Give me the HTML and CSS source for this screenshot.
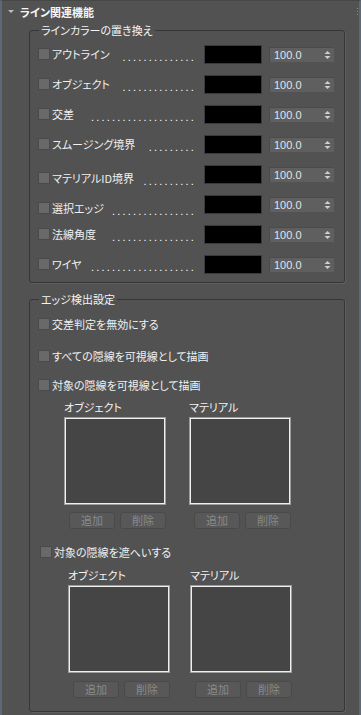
FILE: index.html
```html
<!DOCTYPE html>
<html lang="ja">
<head>
    <meta charset="UTF-8">
    <meta name="viewport" content="width=device-width, initial-scale=1.0">
    <title>ライン関連機能</title>
    <link rel="stylesheet" href="styles.css">
</head>
<body>
    <div class="panel">
        <div class="rollout-head">
            <span class="arrow"></span>
            <span class="title">ライン関連機能</span>
            <svg class="grip" width="2" height="7" viewBox="0 0 2 7"><rect x="0" y="0" width="1" height="1"/><rect x="0" y="3" width="1" height="1"/><rect x="0" y="6" width="1" height="1"/></svg>
        </div>

        <fieldset class="group colors">
            <legend>ラインカラーの置き換え</legend>
            <div class="row">
                <div class="lead"><span class="cb"></span><span class="lbl">アウトライン</span><span class="dots">..............</span></div>
                <span class="swatch"></span>
                <span class="spin"><span class="num">100.0</span><svg width="7" height="10" viewBox="0 0 7 10"><polygon points="0.5,4 3.5,1 6.5,4"/><polygon points="0.5,6 3.5,9 6.5,6"/></svg></span>
            </div>
            <div class="row">
                <div class="lead"><span class="cb"></span><span class="lbl">オブジェクト</span><span class="dots">..............</span></div>
                <span class="swatch"></span>
                <span class="spin"><span class="num">100.0</span><svg width="7" height="10" viewBox="0 0 7 10"><polygon points="0.5,4 3.5,1 6.5,4"/><polygon points="0.5,6 3.5,9 6.5,6"/></svg></span>
            </div>
            <div class="row">
                <div class="lead"><span class="cb"></span><span class="lbl">交差</span><span class="dots">....................</span></div>
                <span class="swatch"></span>
                <span class="spin"><span class="num">100.0</span><svg width="7" height="10" viewBox="0 0 7 10"><polygon points="0.5,4 3.5,1 6.5,4"/><polygon points="0.5,6 3.5,9 6.5,6"/></svg></span>
            </div>
            <div class="row">
                <div class="lead"><span class="cb"></span><span class="lbl">スムージング境界</span><span class="dots">.........</span></div>
                <span class="swatch"></span>
                <span class="spin"><span class="num">100.0</span><svg width="7" height="10" viewBox="0 0 7 10"><polygon points="0.5,4 3.5,1 6.5,4"/><polygon points="0.5,6 3.5,9 6.5,6"/></svg></span>
            </div>
            <div class="row low">
                <div class="lead"><span class="cb"></span><span class="lbl">マテリアルID境界</span><span class="dots">..........</span></div>
                <span class="swatch"></span>
                <span class="spin"><span class="num">100.0</span><svg width="7" height="10" viewBox="0 0 7 10"><polygon points="0.5,4 3.5,1 6.5,4"/><polygon points="0.5,6 3.5,9 6.5,6"/></svg></span>
            </div>
            <div class="row low">
                <div class="lead"><span class="cb"></span><span class="lbl">選択エッジ</span><span class="dots">................</span></div>
                <span class="swatch"></span>
                <span class="spin"><span class="num">100.0</span><svg width="7" height="10" viewBox="0 0 7 10"><polygon points="0.5,4 3.5,1 6.5,4"/><polygon points="0.5,6 3.5,9 6.5,6"/></svg></span>
            </div>
            <div class="row">
                <div class="lead"><span class="cb"></span><span class="lbl">法線角度</span><span class="dots">................</span></div>
                <span class="swatch"></span>
                <span class="spin"><span class="num">100.0</span><svg width="7" height="10" viewBox="0 0 7 10"><polygon points="0.5,4 3.5,1 6.5,4"/><polygon points="0.5,6 3.5,9 6.5,6"/></svg></span>
            </div>
            <div class="row">
                <div class="lead"><span class="cb"></span><span class="lbl">ワイヤ</span><span class="dots">....................</span></div>
                <span class="swatch"></span>
                <span class="spin"><span class="num">100.0</span><svg width="7" height="10" viewBox="0 0 7 10"><polygon points="0.5,4 3.5,1 6.5,4"/><polygon points="0.5,6 3.5,9 6.5,6"/></svg></span>
            </div>
        </fieldset>

        <fieldset class="group edges">
            <legend>エッジ検出設定</legend>
            <div class="check c1"><span class="cb"></span><span class="lbl">交差判定を無効にする</span></div>
            <div class="check c2"><span class="cb"></span><span class="lbl">すべての隠線を可視線として描画</span></div>
            <div class="check c3"><span class="cb"></span><span class="lbl">対象の隠線を可視線として描画</span></div>

            <div class="lists lists-a">
                <div class="col">
                    <div class="cap">オブジェクト</div>
                    <div class="listbox"></div>
                    <div class="btns"><button disabled>追加</button><button disabled>削除</button></div>
                </div>
                <div class="col">
                    <div class="cap">マテリアル</div>
                    <div class="listbox"></div>
                    <div class="btns"><button disabled>追加</button><button disabled>削除</button></div>
                </div>
            </div>

            <div class="check c4"><span class="cb"></span><span class="lbl">対象の隠線を遮へいする</span></div>

            <div class="lists lists-b">
                <div class="col">
                    <div class="cap">オブジェクト</div>
                    <div class="listbox"></div>
                    <div class="btns"><button disabled>追加</button><button disabled>削除</button></div>
                </div>
                <div class="col">
                    <div class="cap">マテリアル</div>
                    <div class="listbox"></div>
                    <div class="btns"><button disabled>追加</button><button disabled>削除</button></div>
                </div>
            </div>
        </fieldset>
    </div>
</body>
</html>
```

FILE: styles.css
```css
html, body {
    margin: 0;
    padding: 0;
    background-color: #525252;
}

body {
    font-family: "Noto Sans CJK JP", "Liberation Sans", sans-serif;
    font-size: 11px;
    line-height: 12px;
    color: #f0f0f0;
}

.panel {
    width: 361px;
    min-height: 715px;
    box-sizing: border-box;
    border-left: 2px solid #5d6976;
    border-right: 2px solid #5d6976;
    border-top: 1px solid #474747;
}

/* rollout title */
.rollout-head {
    display: flex;
    align-items: center;
    height: 21px;
}

.arrow {
    width: 0;
    height: 0;
    margin-left: 6px;
    border-left: 3px solid transparent;
    border-right: 3px solid transparent;
    border-top: 3px solid #bdbdbd;
}

.title {
    margin-left: 6px;
    font-weight: bold;
    color: #f6f6f6;
    font-feature-settings: "palt";
}

.grip {
    margin-left: auto;
    fill: #8e8e8e;
}

/* group boxes */
.group {
    margin: 2px 0 0 27px;
    padding: 0;
    width: 316px;
    box-sizing: border-box;
    border: 1px solid #363636;
    border-radius: 3px;
    box-shadow: 1px 1px 0 #5e5e5e;
    min-inline-size: 0;
}

.group legend {
    margin-left: 1px;
    padding: 0 2px;
    line-height: 12px;
    color: #f4f4f4;
    font-feature-settings: "palt";
}

.colors {
    padding: 3px 9px 3px 8px;
}

.edges {
    margin-top: 10px;
    padding: 12px 0 13px 8px;
}

.cb {
    flex: none;
    width: 12px;
    height: 12px;
    box-sizing: border-box;
    background-color: #696969;
    border: 1px solid #4a4a4a;
}

.lbl {
    margin-left: 2px;
    white-space: nowrap;
    font-feature-settings: "palt";
}

/* colour rows */
.row {
    display: flex;
    align-items: center;
    height: 30px;
}

.lead {
    display: flex;
    align-items: center;
    flex: none;
    width: 166px;
}

.row.low .lead {
    margin-top: 7px;
}

.dots {
    flex: none;
    margin-left: auto;
    margin-right: 8px;
    font-family: "Liberation Sans", sans-serif;
    font-size: 11px;
    letter-spacing: 2.2px;
    white-space: nowrap;
    color: #ffffff;
    position: relative;
    top: 3px;
}

.swatch {
    flex: none;
    width: 58px;
    height: 19px;
    box-sizing: border-box;
    background-color: #000;
    border: 1px solid #3a3a3a;
}

.spin {
    display: flex;
    align-items: center;
    flex: none;
    width: 65px;
    height: 15px;
    margin-left: 7px;
    box-sizing: border-box;
    background-color: #5f5f5f;
    border-top: 1px solid #4b4b4b;
    border-left: 1px solid #4b4b4b;
}

.spin .num {
    padding-left: 4px;
    font-family: "Liberation Sans", sans-serif;
    font-size: 11px;
    color: #dfe6ee;
}

.spin svg {
    margin-left: auto;
    margin-right: 3px;
    fill: #cfcfcf;
}

/* edge detection */
.check {
    display: flex;
    align-items: center;
    height: 14px;
}

.c2 { margin-top: 18px; }
.c3 { margin-top: 15px; }
.c4 { margin-top: 16px; padding-left: 2px; }

.lists {
    display: flex;
}

.lists-a {
    margin-top: 9px;
    padding-left: 26px;
    gap: 23px;
}

.lists-b {
    margin-top: 10px;
    padding-left: 30px;
    gap: 20px;
}

.col {
    width: 102px;
}

.cap {
    color: #f4f4f4;
    font-feature-settings: "palt";
}

.listbox {
    height: 88px;
    margin-top: 4px;
    box-sizing: border-box;
    background-color: #454545;
    border: 1px solid #9c9c9c;
    box-shadow: inset 0 0 0 1px #f0f0f0;
}

.btns {
    display: flex;
    justify-content: flex-end;
    gap: 5px;
    margin-top: 7px;
}

.lists-b .btns {
    margin-top: 8px;
}

.btns button {
    width: 46px;
    height: 17px;
    padding: 0;
    font-family: "Noto Sans CJK JP", sans-serif;
    font-size: 11px;
    line-height: 15px;
    color: #8a8a8a;
    background-color: #585858;
    border: 1px solid #4a4a4a;
    border-radius: 3px;
}
```
